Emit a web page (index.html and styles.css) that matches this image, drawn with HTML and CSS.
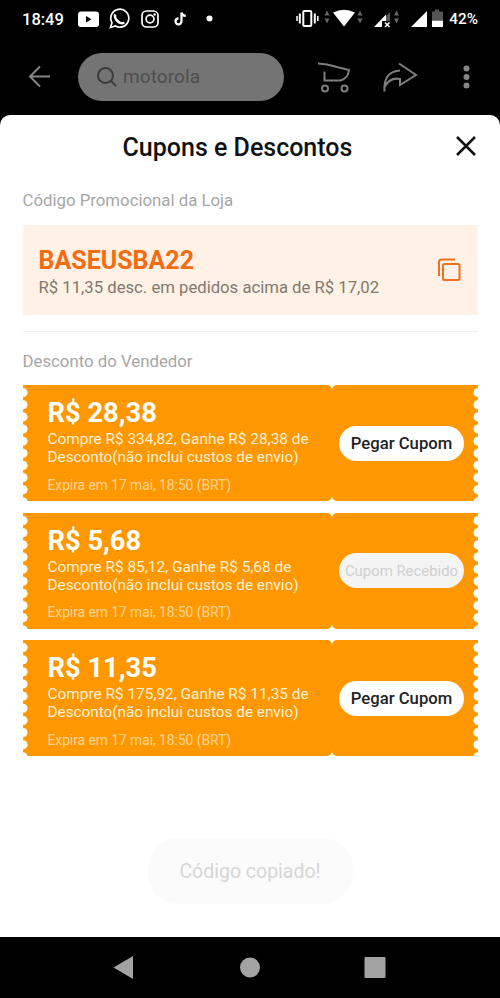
FILE: index.html
```html
<!DOCTYPE html>
<html lang="pt-BR">
<head>
<meta charset="utf-8">
<meta name="viewport" content="width=device-width, initial-scale=1">
<title>Cupons e Descontos</title>
<link rel="stylesheet" href="styles.css">
</head>
<body>
<div class="screen">
  <header class="status">
    <span class="clock">18:49</span>
    <svg class="status-icons" width="480" height="38" viewBox="0 0 480 38" aria-hidden="true">
      <rect x="58" y="11.500" width="21" height="15.500" rx="3" fill="#fff"/><path d="M66 16v6.500l5.500-3.200z" fill="#000"/>
      <g fill="none" stroke="#fff" stroke-width="1.700"><path d="M90.500 27.500l1.500-4.800a9 9 0 1 1 3.300 3.300z"/><path d="M95.500 14.500c-1.500 1.500 0 4.500 2 6.500s5 3.200 6.700 1.200" stroke-width="2.500"/><rect x="122" y="11" width="16" height="16" rx="4.500"/><circle cx="130" cy="19" r="3.900"/></g>
      <circle cx="134.600" cy="14.500" r="1.200" fill="#fff"/>
      <path d="M161.500 12.500v8.800a3 3 0 1 1-3-3M161.500 12.500c.3 2.300 1.800 3.200 4.300 3.400" fill="none" stroke="#fff" stroke-width="2.300"/>
      <circle cx="189.500" cy="18.500" r="3" fill="#fff"/>
      <g fill="none" stroke="#fff"><rect x="283.300" y="11" width="8" height="15" rx="1" stroke-width="2"/><path d="M279.800 13.500v10M294.800 13.500v10" stroke-width="2"/><path d="M277 16v5M297.800 16v5" stroke-width="1.500"/></g>
      <g fill="#666"><path d="M304.500 15.500h5l-2.500-5zM304.500 18.500h5l-2.500 5zM337.500 15.500h5l-2.500-5zM337.500 18.500h5l-2.500 5zM374 15.500h5l-2.500-5zM374 18.500h5l-2.500 5z"/></g>
      <path d="M313 12.500q11-5.500 22 0L324 26.500z" fill="#fff"/>
      <path d="M370 12v9h-6v-3z" fill="#555"/>
      <path d="M354 27l12-12.500v6.500h-4v6z" fill="#fff"/><path d="M365 22.500l4.500 4.500m0-4.500L365 27" stroke="#fff" stroke-width="1.500"/>
      <path d="M391 27l16-16v16z" fill="#fff"/>
      <path d="M415 9.500h4v2h4V20h-11v-8.500h3z" fill="#555"/><path d="M412 20.500h11v6.500h-11z" fill="#fff"/>
    </svg>
    <span class="battery">42%</span>
  </header>
  <div class="toolbar">
    <svg class="back" width="24" height="24" viewBox="0 0 24 24"><path d="M23 11.500H3M13 1.500L3 11.500l10 10" fill="none" stroke="#858585" stroke-width="2"/></svg>
    <div class="search">
      <svg width="20" height="20" viewBox="0 0 20 20"><circle cx="8.500" cy="8.500" r="7.500" fill="none" stroke="#3c3c3c" stroke-width="2"/><path d="M14 14l5 5" stroke="#3c3c3c" stroke-width="2"/></svg>
      <span>motorola</span>
    </div>
    <svg class="tools" width="182" height="36" viewBox="0 0 182 36" fill="none" stroke="#7e7e7e" stroke-width="2">
      <path d="M0 4.500l9 1 22 5.500q-1 8.500-8.500 10.500H6.500v-9"/><circle cx="7" cy="29.500" r="3"/><circle cx="26.500" cy="29.500" r="3"/>
      <path d="M66.500 32.500c-1-14 5-20.500 15.500-21m-1-7L98 16 82 26v-6c-7-1.500-12 1.500-15.500 8"/>
      <g fill="#858585" stroke="none"><circle cx="148.500" cy="9.500" r="3"/><circle cx="148.500" cy="18" r="3"/><circle cx="148.500" cy="26.500" r="3"/></g>
    </svg>
  </div>
  <main class="sheet">
    <div class="sheet-head">
      <h1>Cupons e Descontos</h1>
      <svg class="close" width="20" height="20" viewBox="0 0 20 20"><path d="M1 1l18 18M19 1L1 19" stroke="#111" stroke-width="2.500"/></svg>
    </div>
    <h2 class="label-code">Código Promocional da Loja</h2>
    <section class="promo">
      <div>
        <strong>BASEUSBA22</strong>
        <p>R$ 11,35 desc. em pedidos acima de R$ 17,02</p>
      </div>
      <svg width="24" height="24" viewBox="0 0 24 24" fill="none" stroke="#f27022" stroke-width="2"><rect x="6" y="6" width="16.500" height="16" rx="1.500"/><path d="M2 18V4Q2 1.500 4.500 1.500H18"/></svg>
    </section>
    <hr>
    <h2 class="label-seller">Desconto do Vendedor</h2>
    <section class="coupons">
      <article class="coupon">
        <div class="info"><strong>R$ 28,38</strong><p class="terms">Compre R$ 334,82, Ganhe R$ 28,38 de<br><span>Desconto(não inclui custos de envio)</span></p><p class="expiry">Expira em 17 mai, 18:50 (BRT)</p></div>
        <div class="action"><button>Pegar Cupom</button></div>
      </article>
      <article class="coupon">
        <div class="info"><strong>R$ 5,68</strong><p class="terms">Compre R$ 85,12, Ganhe R$ 5,68 de<br><span>Desconto(não inclui custos de envio)</span></p><p class="expiry">Expira em 17 mai, 18:50 (BRT)</p></div>
        <div class="action"><button class="received">Cupom Recebido</button></div>
      </article>
      <article class="coupon">
        <div class="info"><strong>R$ 11,35</strong><p class="terms">Compre R$ 175,92, Ganhe R$ 11,35 de<br><span>Desconto(não inclui custos de envio)</span></p><p class="expiry">Expira em 17 mai, 18:50 (BRT)</p></div>
        <div class="action"><button>Pegar Cupom</button></div>
      </article>
    </section>
    <div class="toast">Código copiado!</div>
  </main>
  <nav class="nav">
    <svg width="500" height="61" viewBox="0 0 500 61" fill="#a3a3a3"><path d="M113.500 30.500L133 19v23z"/><circle cx="250" cy="30.500" r="10"/><rect x="364.500" y="20" width="21" height="21" rx="1"/></svg>
  </nav>
</div>
</body>
</html>
```
FILE: styles.css
```css
* { box-sizing: border-box; margin: 0; padding: 0; }
body { font-family: Roboto, "Liberation Sans", sans-serif; background: #000; }
.screen { width: 500px; height: 998px; display: flex; flex-direction: column; overflow: hidden; }
svg { display: block; flex: none; }
.status { height: 38px; position: relative; display: flex; justify-content: space-between; align-items: center; padding: 0 22px; color: #fff; font-weight: 500; }
.clock { font-size: 16.5px; }
.battery { font-size: 15.3px; }
.status-icons { position: absolute; left: 20px; top: 0; }
.toolbar { height: 77px; display: flex; align-items: center; padding-left: 27px; }
.search { margin-left: 27px; width: 206px; height: 48px; border-radius: 24px; background: #747474; display: flex; align-items: center; gap: 6px; padding-left: 19px; color: #4e4e4e; font-size: 19px; letter-spacing: .1px; }
.tools { margin-left: 34px; }
.sheet { height: 822px; background: #fff; border-radius: 10px 10px 0 0; padding: 0 22.5px; display: flex; flex-direction: column; }
.sheet-head { height: 66px; display: flex; align-items: center; }
h1 { margin-left: 100px; font-size: 25px; font-weight: 500; line-height: 30px; color: #111; white-space: nowrap; }
.close { margin-left: auto; margin-top: -4px; margin-right: 1.5px; }
h2 { font-size: 16.8px; font-weight: 400; line-height: 20px; color: #a6a6a6; white-space: nowrap; }
.label-code { margin-top: 9px; }
.promo { margin-top: 15px; height: 90px; background: #fff1e5; display: flex; align-items: center; justify-content: space-between; padding: 0 16.5px 0 16px; }
.promo strong { display: block; font-size: 25px; line-height: 29px; font-weight: 700; color: #f36c12; margin-top: 5px; }
.promo p { font-size: 16.7px; line-height: 24px; margin-top: 1px; color: #817970; white-space: nowrap; }
hr { border: 0; height: 1px; background: #eee; margin-top: 15.5px; flex: none; }
.label-seller { margin-top: 19.5px; }
.coupons { margin-top: 14px; display: flex; flex-direction: column; gap: 11.5px; }
.coupon { height: 116px; display: flex; gap: .5px; position: relative; background: linear-gradient(#ffb03a, #ffb03a) 309px 5px / 1px 106px no-repeat; }
.coupon::before, .coupon::after { content: ""; position: absolute; top: 0; width: 5px; height: 116px; background: radial-gradient(circle at 0 50%, #fff 4.2px, transparent 4.9px) 0 1.5px / 5px 12.15px; }
.coupon::before { left: 0; }
.coupon::after { right: 0; transform: scaleX(-1); }
.info { width: 309px; background: #ff9800; border-radius: 0 5px 5px 0; padding: 12px 0 0 25px; color: #fff; white-space: nowrap; }
.info strong { display: block; font-size: 27.3px; font-weight: 700; line-height: 32px; }
.terms { font-size: 15.4px; line-height: 18px; margin-top: 1px; color: #fff0d8; }
.terms span { font-size: 15.3px; }
.expiry { font-size: 13.75px; line-height: 18px; margin-top: 9.5px; color: #ffd596; }
.action { flex: 1; background: #ff9800; border-radius: 5px 0 0 5px; display: flex; align-items: center; padding-left: 7px; }
button { width: 125px; height: 35px; border: 0; border-radius: 17.5px; background: #fff; font: 500 16.7px Roboto, sans-serif; color: #222; white-space: nowrap; }
.received { background: #f4f4f4; color: #d0d0d0; font-size: 14.9px; font-weight: 400; }
.toast { width: 205px; height: 66px; margin: 82px auto 0; border-radius: 30px; background: #fbfbfb; color: #d6d6d6; display: flex; align-items: center; justify-content: center; font-size: 19.5px; }
.nav { height: 61px; background: #000; }
```
